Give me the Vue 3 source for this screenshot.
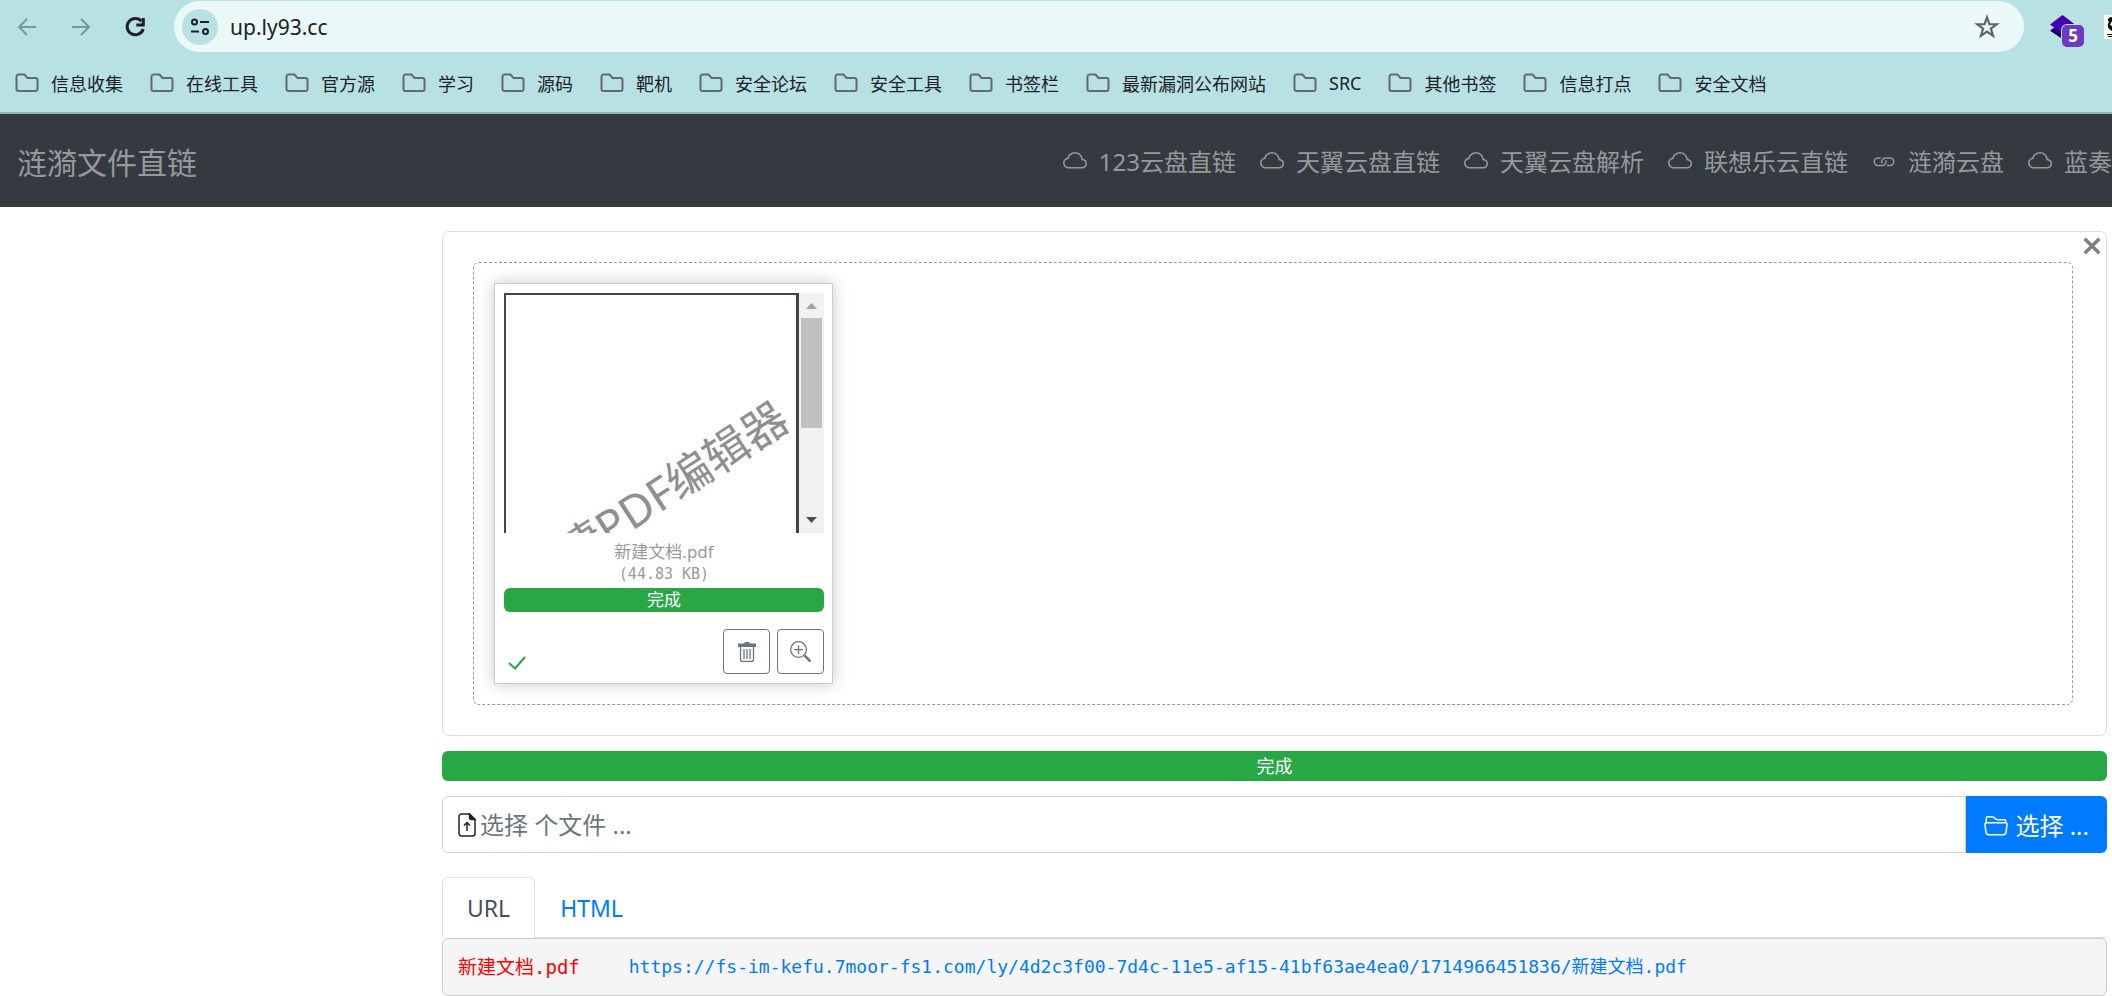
<script setup>
import { ref } from 'vue'

const bookmarks = [
  '信息收集', '在线工具', '官方源', '学习', '源码', '靶机', '安全论坛', '安全工具',
  '书签栏', '最新漏洞公布网站', 'SRC', '其他书签', '信息打点', '安全文档',
]

const links = [
  { icon: 'cloud', label: '123云盘直链' },
  { icon: 'cloud', label: '天翼云盘直链' },
  { icon: 'cloud', label: '天翼云盘解析' },
  { icon: 'cloud', label: '联想乐云直链' },
  { icon: 'link', label: '涟漪云盘' },
  { icon: 'cloud', label: '蓝奏' },
]

const address = ref('up.ly93.cc')
const caption = ref('')
const tab = ref('URL')
const fileUrl = 'https://fs-im-kefu.7moor-fs1.com/ly/4d2c3f00-7d4c-11e5-af15-41bf63ae4ea0/1714966451836/新建文档.pdf'
</script>

<template>
  <div class="window">
    <header class="browser">
      <div class="toolbar">
        <button class="tool dim" aria-label="后退">
          <svg viewBox="0 0 24 24"><path d="M21 12H4M12 4l-8 8 8 8" /></svg>
        </button>
        <button class="tool dim" aria-label="前进">
          <svg viewBox="0 0 24 24"><path d="M3 12h17M12 4l8 8-8 8" /></svg>
        </button>
        <button class="tool reload" aria-label="重新加载">
          <svg viewBox="0 0 24 24"><path d="M18.500 6.200A8.200 8.200 0 1 0 20.200 14" /><path d="M20.300 3v7h-7" /></svg>
        </button>
        <div class="address">
          <button class="site" aria-label="网站信息">
            <svg viewBox="0 0 24 24"><circle cx="6.500" cy="7" r="2.500" /><path d="M12 7h9M3 16.500h8" /><circle cx="17.500" cy="16.500" r="2.500" /></svg>
          </button>
          <input v-model="address" class="address-input" type="text" aria-label="地址" />
          <button class="star" aria-label="收藏">
            <svg viewBox="0 0 24 24"><path d="M12 3l2.200 6.300 6.800.100-5.400 4.100 2 6.600L12 16.200l-5.600 3.900 2-6.600L3 9.400l6.800-.1z" /></svg>
          </button>
        </div>
        <button class="extension" aria-label="扩展程序">
          <svg class="layers" viewBox="0 0 24 24"><path d="M0 15l12 8 12-8-4-3H4z" fill="#1c0070" /><path d="M12 0l12 9-12 9L0 9z" fill="#4400b0" /></svg>
          <span class="badge">5</span>
        </button>
        <svg class="clipped" viewBox="0 0 8 24"><path d="M0 0h8v24H0z" fill="#fff" /><path d="M8 2C4 2 3 5 5 7c-2 2-2 7 3 9v-5L6 10l2-4zM3 19h5v1H3zM4 21h4v1H4z" fill="#111" /></svg>
      </div>
      <nav class="bookmarks" aria-label="书签">
        <a v-for="name in bookmarks" :key="name" href="#" class="bookmark">
          <svg viewBox="0 0 24 24"><path d="M3.500 3.500h6l3 3.500h8a2 2 0 0 1 2 2v9a2 2 0 0 1-2 2h-17a2 2 0 0 1-2-2v-12.500a2 2 0 0 1 2-2z" /></svg>
          <span>{{ name }}</span>
        </a>
      </nav>
    </header>

    <nav class="navbar">
      <a class="brand" href="#">涟漪文件直链</a>
      <div class="links">
        <a v-for="item in links" :key="item.label" href="#">
          <svg v-if="item.icon === 'cloud'" viewBox="0 0 16 16"><path d="M4.406 3.342A5.53 5.53 0 0 1 8 2c2.690 0 4.923 2 5.166 4.579C14.758 6.804 16 8.137 16 9.773 16 11.569 14.502 13 12.687 13H3.781C1.708 13 0 11.366 0 9.318c0-1.763 1.266-3.223 2.942-3.593.143-.863.698-1.723 1.464-2.383m.653.757c-.757.653-1.153 1.440-1.153 2.056v.448l-.445.049C2.064 6.805 1 7.952 1 9.318 1 10.785 2.230 12 3.781 12h8.906C13.980 12 15 10.988 15 9.773c0-1.216-1.020-2.228-2.313-2.228h-.5v-.5C12.188 4.825 10.328 3 8 3a4.530 4.530 0 0 0-2.941 1.100z" /></svg>
          <svg v-else viewBox="0 0 16 16"><path d="M6.354 5.500H4a3 3 0 0 0 0 6h3a3 3 0 0 0 2.830-4H9q-.13 0-.25.031A2 2 0 0 1 7 10.500H4a2 2 0 1 1 0-4h1.535c.218-.376.495-.714.820-1z" /><path d="M9 5.500a3 3 0 0 0-2.830 4h1.098A2 2 0 0 1 9 6.500h3a2 2 0 1 1 0 4h-1.535a4 4 0 0 1-.82 1H12a3 3 0 1 0 0-6z" /></svg>
          <span>{{ item.label }}</span>
        </a>
      </div>
    </nav>

    <main class="content">
      <section class="card">
        <button class="close" aria-label="关闭">
          <svg viewBox="0 0 16 16"><path d="M1.500 1.500l13 13M14.500 1.500l-13 13" /></svg>
        </button>
        <div class="dropzone">
          <figure class="file">
            <svg class="preview" viewBox="0 0 320 240">
              <path d="M0 0h295v240h-3V2H2v238H0z" fill="#42464a" />
              <text x="288" y="134" text-anchor="end" transform="rotate(-33 288 134)">迅捷PDF编辑器</text>
              <path d="M295 0h25v240h-25z" fill="#f1f1f1" />
              <path d="M297 25h21v110h-21z" fill="#c1c1c1" />
              <path d="M302 16l5.500-6 5.500 6z" fill="#a3a3a3" />
              <path d="M302 224h11l-5.500 6z" fill="#505050" />
            </svg>
            <figcaption>
              <span class="name">新建文档.pdf</span>
              <samp>(44.83 KB)</samp>
            </figcaption>
            <div class="progress small">完成</div>
            <div class="actions">
              <svg class="done" viewBox="0 0 18 14"><path d="M1 7l6 5.500L17 1" /></svg>
              <button aria-label="删除文件">
                <svg class="trash" viewBox="0 0 18 20"><path d="M0 1.500h6l1-1.500h4l1 1.500h6v3.500H0z" fill="currentColor" /><path d="M2.500 5v12.500a2 2 0 0 0 2 2h9a2 2 0 0 0 2-2V5M6 7v10M9 7v10M12 7v10" fill="none" stroke="currentColor" stroke-width="1.300" /></svg>
              </button>
              <button aria-label="查看详情">
                <svg class="zoom" viewBox="0 0 16 16"><path fill-rule="evenodd" d="M6.500 12a5.500 5.500 0 1 0 0-11 5.500 5.500 0 0 0 0 11M13 6.500a6.500 6.500 0 1 1-13 0 6.500 6.500 0 0 1 13 0" /><path d="M10.344 11.742q.044.060.098.115l3.850 3.850a1 1 0 0 0 1.415-1.414l-3.850-3.850a1 1 0 0 0-.115-.1 6.500 6.500 0 0 1-1.398 1.400z" /><path d="M6.500 3a.5.500 0 0 1 .5.500V6h2.500a.5.500 0 0 1 0 1H7v2.500a.5.500 0 0 1-1 0V7H3.500a.5.500 0 0 1 0-1H6V3.500a.5.500 0 0 1 .5-.5" /></svg>
              </button>
            </div>
          </figure>
        </div>
      </section>

      <div class="progress">完成</div>

      <div class="picker">
        <label class="field">
          <svg viewBox="0 0 18 24"><path d="M11.500 1H3.500A2.500 2.500 0 0 0 1 3.500v17A2.500 2.500 0 0 0 3.500 23h11a2.500 2.500 0 0 0 2.500-2.500V6.500z" /><path d="M11.500 1v3.500a2 2 0 0 0 2 2H17z" fill="#212529" /><path d="M9 18v-8M6 12.500L9 9.500l3 3" /></svg>
          <input v-model="caption" type="text" placeholder="选择 个文件 ..." aria-label="选择个文件" />
        </label>
        <button class="browse">
          <svg viewBox="0 0 16 16"><path fill-rule="evenodd" d="M1 3.500A1.500 1.500 0 0 1 2.500 2h2.764c.958 0 1.760.560 2.311 1.184C7.985 3.648 8.480 4 9 4h4.500A1.500 1.500 0 0 1 15 5.500v.640c.570.265.940.876.856 1.546l-.640 5.124A2.500 2.500 0 0 1 12.733 15H3.266a2.500 2.500 0 0 1-2.481-2.190l-.640-5.124A1.500 1.500 0 0 1 1 6.140zM2 6h12v-.5a.5.500 0 0 0-.5-.5H9c-.964 0-1.710-.629-2.174-1.154C6.374 3.334 5.820 3 5.264 3H2.500a.5.500 0 0 0-.5.500zm-.367 1a.5.500 0 0 0-.496.562l.640 5.124A1.500 1.500 0 0 0 3.266 14h9.468a1.500 1.500 0 0 0 1.489-1.314l.640-5.124A.5.500 0 0 0 14.367 7z" /></svg>
          <span>选择 ...</span>
        </button>
      </div>

      <div class="tabs" role="tablist">
        <button v-for="t in ['URL', 'HTML']" :key="t" role="tab" :aria-selected="tab === t" :class="{ active: tab === t }" @click="tab = t">{{ t }}</button>
      </div>
      <div class="result"><span class="title">新建文档.pdf</span><a href="#">{{ fileUrl }}</a></div>
    </main>
  </div>
</template>

<style>
body {
  background: #fff;
}
</style>

<style scoped>
* {
  box-sizing: border-box;
}

.window {
  font-family: "Noto Sans", "Noto Sans CJK SC", sans-serif;
  color: #212529;
}

button {
  margin: 0;
  padding: 0;
  border: 0;
  background: none;
  font: inherit;
  color: inherit;
}

input {
  min-width: 0;
  padding: 0;
  border: 0;
  outline: 0;
  background: none;
  font: inherit;
  color: inherit;
}

svg {
  display: block;
  flex: none;
}

a {
  text-decoration: none;
}

.browser {
  height: 114px;
  background: #b8e1e4;
  border-bottom: 2px solid #92b5b8;
}

.toolbar {
  display: flex;
  align-items: center;
  height: 53px;
  padding-left: 15px;
  overflow: hidden;
}

.tool {
  flex: none;
  width: 24px;
  height: 24px;
  margin-right: 30px;
  color: #202124;
}

.tool.dim {
  color: #7b9799;
}

.tool svg {
  width: 24px;
  fill: none;
  stroke: currentColor;
  stroke-width: 2;
}

.tool.reload {
  margin-right: 27px;
}

.tool.reload svg {
  stroke-width: 3;
}

.address {
  display: flex;
  flex: 1;
  align-items: center;
  height: 51px;
  padding: 0 24px 0 8px;
  border-radius: 26px;
  background: #ebf8f8;
}

.site {
  display: grid;
  flex: none;
  place-items: center;
  width: 36px;
  height: 36px;
  margin-right: 12px;
  border-radius: 50%;
  background: #b8e1e4;
}

.site svg {
  width: 24px;
  fill: none;
  stroke: #202124;
  stroke-width: 2;
}

.address-input {
  flex: 1;
  font-size: 21px;
  color: #202124;
}

.star svg {
  width: 26px;
  fill: none;
  stroke: #5f6368;
  stroke-width: 2;
}

.extension {
  position: relative;
  flex: none;
  width: 36px;
  height: 24px;
  margin: 0 18px 0 26px;
}

.layers {
  width: 25px;
}

.badge {
  position: absolute;
  top: 10px;
  left: 12px;
  width: 22px;
  border-radius: 5px;
  background: #6d3bbf;
  box-shadow: 0 0 0 1px #b8e1e4;
  color: #fff;
  font-size: 17px;
  font-weight: 700;
  line-height: 22px;
}

.clipped {
  width: 8px;
}

.bookmarks {
  display: flex;
  align-items: center;
  gap: 27px;
  height: 59px;
  padding-left: 15px;
}

.bookmark {
  display: flex;
  align-items: center;
  gap: 12px;
  color: #202124;
  font-size: 18px;
  white-space: nowrap;
}

.bookmark svg {
  width: 24px;
  fill: none;
  stroke: #626a6c;
  stroke-width: 2;
}

.navbar {
  display: flex;
  align-items: center;
  justify-content: space-between;
  height: 93px;
  padding-left: 17px;
  overflow: hidden;
  background: #343a40;
}

.brand {
  color: #96999c;
  font-size: 30px;
}

.links {
  display: flex;
  gap: 24px;
}

.links a {
  display: flex;
  align-items: center;
  gap: 12px;
  color: #96999c;
  font-size: 24px;
  white-space: nowrap;
}

.links svg {
  width: 24px;
  fill: currentColor;
}

.content {
  margin-left: 442px;
  padding: 24px 5px 0 0;
}

.card {
  position: relative;
  padding: 30px 33px 30px 30px;
  border: 1px solid #ddd;
  border-radius: 7px;
}

.close {
  position: absolute;
  top: 5px;
  right: 5px;
}

.close svg {
  width: 18px;
  fill: none;
  stroke: #7f7f7f;
  stroke-width: 3;
}

.dropzone {
  display: flex;
  padding: 20px;
  border: 1px dashed #999;
  border-radius: 6px;
}

.file {
  margin: 0;
  padding: 9px 8px 9px 9px;
  border: 1px solid #ccc;
  box-shadow: 0 0 15px rgba(0, 0, 0, 0.22);
}

.preview {
  width: 320px;
}

.preview text {
  fill: #8f8f8f;
  font-size: 45px;
}

figcaption {
  display: flex;
  flex-direction: column;
  align-items: center;
  margin: 8px 0 3px;
  color: #999;
  font-size: 17px;
  line-height: 22px;
}

samp {
  font-family: "DejaVu Sans Mono", monospace;
  font-size: 15px;
}

.progress {
  margin-top: 15px;
  border-radius: 6px;
  background: #28a745;
  color: #fff;
  font-size: 18px;
  line-height: 30px;
  text-align: center;
}

.progress.small {
  margin-top: 0;
  font-size: 17px;
  line-height: 24px;
}

.actions {
  display: flex;
  gap: 7px;
  margin-top: 17px;
}

.done {
  align-self: flex-end;
  width: 18px;
  margin: 0 auto 4px 4px;
  fill: none;
  stroke: #28a745;
  stroke-width: 2;
}

.actions button {
  display: grid;
  place-items: center;
  width: 47px;
  height: 45px;
  border: 1px solid #6c757d;
  border-radius: 4px;
  color: #6c757d;
}

.trash {
  width: 18px;
}

.zoom {
  width: 21px;
  fill: currentColor;
}

.picker {
  display: flex;
  height: 57px;
  margin-top: 15px;
  font-size: 24px;
}

.field {
  display: flex;
  flex: 1;
  align-items: center;
  gap: 4px;
  padding-left: 15px;
  border: 1px solid #ced4da;
  border-radius: 6px 0 0 6px;
}

.field svg {
  width: 18px;
  fill: none;
  stroke: #212529;
  stroke-width: 1.5;
}

.field input {
  flex: 1;
}

.field input::placeholder {
  color: #6c757d;
  opacity: 1;
}

.browse {
  display: flex;
  align-items: center;
  gap: 7px;
  padding: 0 18px;
  border-radius: 0 6px 6px 0;
  background: #007bff;
  color: #fff;
}

.browse svg {
  width: 24px;
  fill: currentColor;
}

.tabs {
  display: flex;
  margin-top: 24px;
  border-bottom: 1px solid #dee2e6;
  font-size: 23px;
}

.tabs button {
  height: 61px;
  margin-bottom: -1px;
  padding: 0 24px;
  border: 1px solid transparent;
  border-radius: 6px 6px 0 0;
  color: #007bff;
}

.tabs .active {
  border-color: #dee2e6 #dee2e6 #fff;
  background: #fff;
  color: #495057;
}

.result {
  display: flex;
  align-items: center;
  padding: 0 15px;
  border: 1px solid #ccc;
  border-radius: 6px;
  background: #f5f5f5;
  font-family: "DejaVu Sans Mono", "Noto Sans CJK SC", monospace;
  font-size: 18px;
  line-height: 56px;
  white-space: nowrap;
}

.title {
  margin-right: 49px;
  color: #f00;
  font-size: 19px;
}

.result a {
  color: #007bff;
}
</style>
